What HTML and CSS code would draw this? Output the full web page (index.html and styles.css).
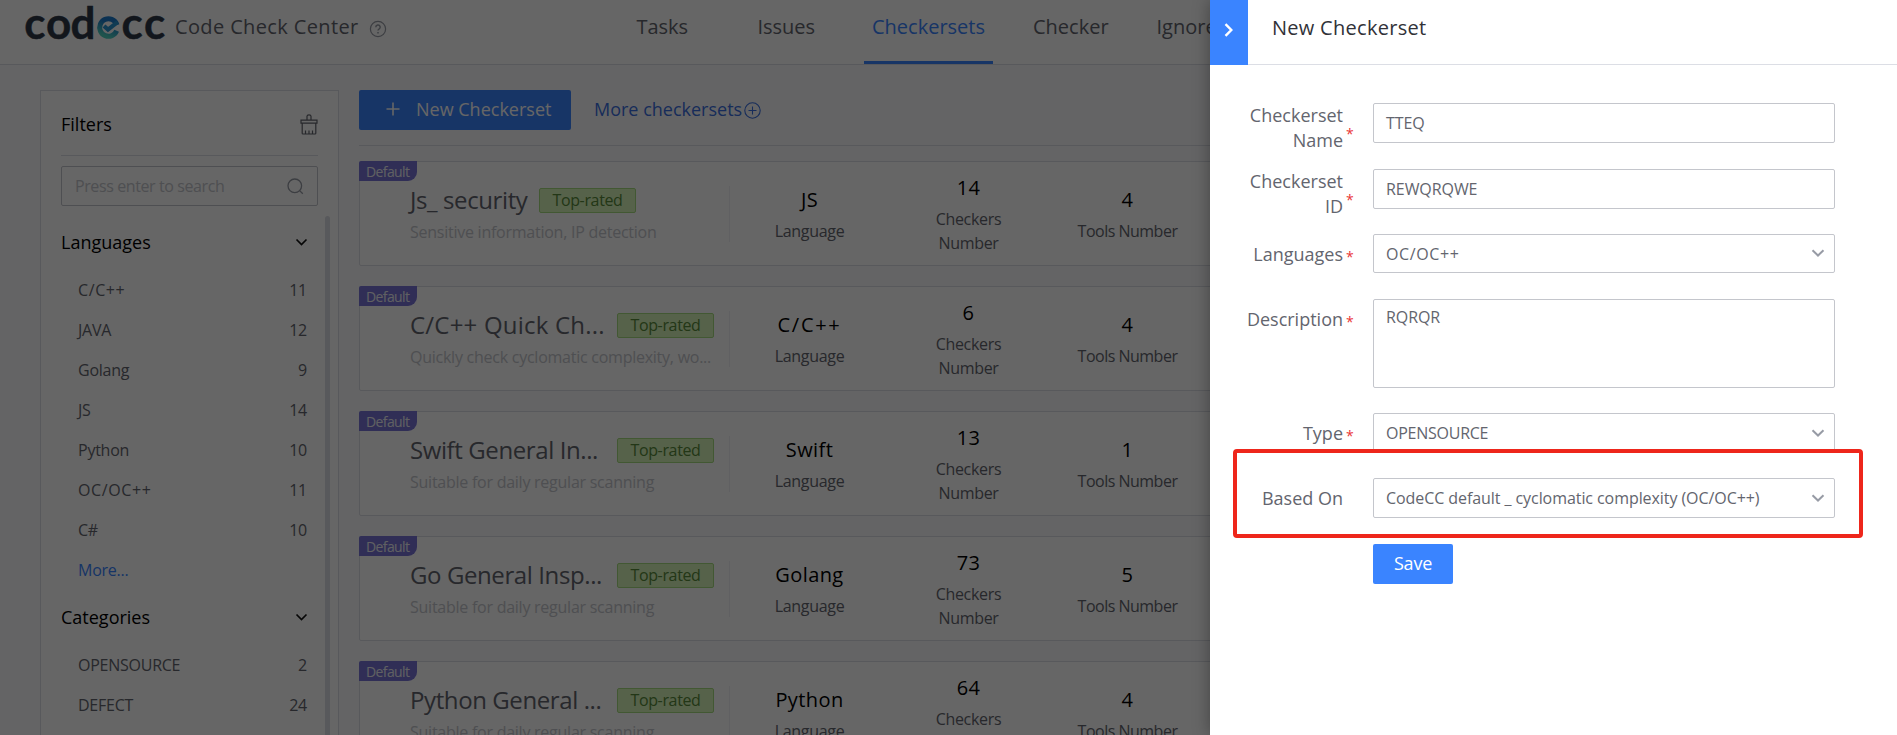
FILE: index.html
```html
<!DOCTYPE html>
<html lang="en">
<head>
<meta charset="utf-8">
<title>CodeCC - Checkersets</title>
<link rel="stylesheet" href="styles.css">
</head>
<body>
<div class="app">
  <header class="topbar">
    <div class="brand">
      <svg class="logo" width="144" height="44" viewBox="0 0 144 44" role="img" aria-label="codecc">
        <defs>
          <linearGradient id="mark" x1="0" y1="0" x2="0" y2="1">
            <stop offset=".25" stop-color="#1c7ccc"/>
            <stop offset="1" stop-color="#4fd0bf"/>
          </linearGradient>
        </defs>
        <text class="logo-text" x="0.300 22 46.500" y="38.500">cod</text>
        <circle cx="84.500" cy="27.500" r="8.800" fill="none" stroke="url(#mark)" stroke-width="5" stroke-dasharray="49 6.300" transform="rotate(22 84.500 27.500)"/>
        <path d="M80 26l4 3.600 9.500-7.400" fill="none" stroke="#2a93d0" stroke-width="4.200"/>
        <text class="logo-text" x="97.500 120" y="38.500">cc</text>
      </svg>
      <span class="brand-name">Code Check Center</span>
      <svg class="help" width="18" height="18" viewBox="0 0 18 18"><circle cx="9" cy="9" r="7.600" fill="none" stroke="#979ba5" stroke-width="1.200"/><path d="M6.800 7.300a2.200 2.200 0 1 1 3.200 1.900c-.7.4-1 .7-1 1.400M9 11.900v1.600" fill="none" stroke="#979ba5" stroke-width="1.500"/></svg>
    </div>
    <nav class="tabs">
      <a class="tab">Tasks</a>
      <a class="tab">Issues</a>
      <a class="tab active">Checkersets</a>
      <a class="tab">Checker</a>
      <a class="tab last">Ignore</a>
    </nav>
  </header>

  <div class="body">
    <aside class="sidebar">
      <div class="filter-head">
        <span>Filters</span>
        <svg width="18" height="21" viewBox="0 0 18 21" fill="none" stroke="#63656e" stroke-width="1.200"><path d="M7 6V2.200Q7 .8 9 .8t2 1.400V6M1 6.200h16v3H1zM2.200 9.200v10q0 .8.8.8h12q.8 0 .8-.8v-10M5.500 20v-3.500M9 20v-3.500M12.500 20v-3.500"/></svg>
      </div>
      <div class="search">
        <span>Press enter to search</span>
        <svg width="17" height="17" viewBox="0 0 17 17" fill="none" stroke="#979ba5" stroke-width="1.300"><circle cx="7.800" cy="7.800" r="6.800"/><path d="M12.600 12.600l3.200 3.200"/></svg>
      </div>
      <div class="filter-scroll">
        <div class="groups">
          <div class="group-head"><span>Languages</span><svg class="chev" width="13" height="9" viewBox="0 0 13 9"><path d="M1.500 1.500l5 5 5-5"/></svg></div>
          <div class="opt"><span class="plus">C/C++</span><span>11</span></div>
          <div class="opt"><span>JAVA</span><span>12</span></div>
          <div class="opt"><span>Golang</span><span>9</span></div>
          <div class="opt"><span>JS</span><span>14</span></div>
          <div class="opt"><span>Python</span><span>10</span></div>
          <div class="opt"><span class="plus">OC/OC++</span><span>11</span></div>
          <div class="opt"><span>C#</span><span>10</span></div>
          <div class="opt more"><span>More...</span></div>
          <div class="group-head"><span>Categories</span><svg class="chev" width="13" height="9" viewBox="0 0 13 9"><path d="M1.500 1.500l5 5 5-5"/></svg></div>
          <div class="opt"><span>OPENSOURCE</span><span>2</span></div>
          <div class="opt"><span>DEFECT</span><span>24</span></div>
        </div>
        <div class="scrollbar"></div>
      </div>
    </aside>

    <main class="main">
      <div class="toolbar">
        <div class="create"><svg width="14" height="14" viewBox="0 0 14 14"><path d="M7 .5v13M.5 7h13" stroke="#fff" stroke-width="1.600"/></svg><span>New Checkerset</span></div>
        <a class="more-sets">More checkersets<svg width="17" height="17" viewBox="0 0 17 17" fill="none" stroke="#3a6fe0" stroke-width="1.100"><circle cx="8.500" cy="8.500" r="7.700"/><path d="M8.500 4.500v8M4.500 8.500h8"/></svg></a>
      </div>

      <section class="card">
        <span class="flag">Default</span>
        <div class="info">
          <div class="title-line"><h3 class="title">Js_ security</h3><span class="rated">Top-rated</span></div>
          <p class="desc">Sensitive information, IP detection</p>
        </div>
        <i class="sep"></i>
        <div class="stat"><b>JS</b><span>Language</span></div>
        <div class="stat"><b>14</b><span>Checkers<br>Number</span></div>
        <div class="stat"><b>4</b><span>Tools Number</span></div>
      </section>

      <section class="card">
        <span class="flag">Default</span>
        <div class="info">
          <div class="title-line"><h3 class="title long wide">C/C++ Quick Ch...</h3><span class="rated">Top-rated</span></div>
          <p class="desc">Quickly check cyclomatic complexity, wo...</p>
        </div>
        <i class="sep"></i>
        <div class="stat"><b class="plus">C/C++</b><span>Language</span></div>
        <div class="stat"><b>6</b><span>Checkers<br>Number</span></div>
        <div class="stat"><b>4</b><span>Tools Number</span></div>
      </section>

      <section class="card">
        <span class="flag">Default</span>
        <div class="info">
          <div class="title-line"><h3 class="title long">Swift General In...</h3><span class="rated">Top-rated</span></div>
          <p class="desc">Suitable for daily regular scanning</p>
        </div>
        <i class="sep"></i>
        <div class="stat"><b>Swift</b><span>Language</span></div>
        <div class="stat"><b>13</b><span>Checkers<br>Number</span></div>
        <div class="stat"><b>1</b><span>Tools Number</span></div>
      </section>

      <section class="card">
        <span class="flag">Default</span>
        <div class="info">
          <div class="title-line"><h3 class="title long">Go General Insp...</h3><span class="rated">Top-rated</span></div>
          <p class="desc">Suitable for daily regular scanning</p>
        </div>
        <i class="sep"></i>
        <div class="stat"><b>Golang</b><span>Language</span></div>
        <div class="stat"><b>73</b><span>Checkers<br>Number</span></div>
        <div class="stat"><b>5</b><span>Tools Number</span></div>
      </section>

      <section class="card">
        <span class="flag">Default</span>
        <div class="info">
          <div class="title-line"><h3 class="title long">Python General ...</h3><span class="rated">Top-rated</span></div>
          <p class="desc">Suitable for daily regular scanning</p>
        </div>
        <i class="sep"></i>
        <div class="stat"><b>Python</b><span>Language</span></div>
        <div class="stat"><b>64</b><span>Checkers<br>Number</span></div>
        <div class="stat"><b>4</b><span>Tools Number</span></div>
      </section>
    </main>
  </div>

  <div class="mask"></div>

  <aside class="drawer">
    <div class="drawer-head">
      <div class="closer"><svg width="10" height="14" viewBox="0 0 10 14"><path d="M1.500 1.200L7.300 7l-5.800 5.800" fill="none" stroke="#fff" stroke-width="2.400"/></svg></div>
      <div class="drawer-title">New Checkerset</div>
    </div>
    <div class="form">
      <div class="field two">
        <label>Checkerset<br>Name</label><em>*</em>
        <div class="control">TTEQ</div>
      </div>
      <div class="field two tight">
        <label>Checkerset<br>ID</label><em>*</em>
        <div class="control">REWQRQWE</div>
      </div>
      <div class="field">
        <label>Languages</label><em>*</em>
        <div class="control short"><span class="plus">OC/OC++</span><svg width="14" height="9" viewBox="0 0 14 9"><path d="M1.500 1.300L7 6.500l5.500-5.200"/></svg></div>
      </div>
      <div class="field tight">
        <label>Description</label><em>*</em>
        <div class="control area">RQRQR</div>
      </div>
      <div class="field tight">
        <label>Type</label><em>*</em>
        <div class="control tighter"><span>OPENSOURCE</span><svg width="14" height="9" viewBox="0 0 14 9"><path d="M1.500 1.300L7 6.500l5.500-5.200"/></svg></div>
      </div>
      <div class="field">
        <label>Based On</label><em></em>
        <div class="control"><span>CodeCC default _ cyclomatic complexity (OC/OC++)</span><svg width="14" height="9" viewBox="0 0 14 9"><path d="M1.500 1.300L7 6.500l5.500-5.200"/></svg></div>
        <div class="marker"></div>
      </div>
      <div class="save">Save</div>
    </div>
  </aside>
</div>
</body>
</html>
```

FILE: styles.css
```css
* { box-sizing: border-box; }
body {
  margin: 0;
  font-family: "Open Sans", "Noto Sans", sans-serif;
  font-size: 16px;
  color: #63656e;
}
.app {
  position: relative;
  height: 735px;
  overflow: hidden;
  background: #fafbfd;
}
svg { display: block; flex: none; }

/* header */
.topbar {
  display: flex;
  height: 65px;
  background: #fff;
  border-bottom: 1px solid #dcdee5;
  font-size: 20px;
  line-height: 54px;
  white-space: nowrap;
}
.brand {
  display: flex;
  align-items: flex-start;
  width: 616px;
  padding-left: 24px;
}
.logo-text {
  font: 700 44px Lato, sans-serif;
  fill: #2d3748;
  stroke: #2d3748;
  stroke-width: .4;
  stroke-linejoin: round;
}
.brand-name { margin-left: 7px; letter-spacing: .37px; }
.help { margin: 20px 0 0 10px; }
.tabs { display: flex; gap: 31.500px; }
.tab {
  min-width: 92.500px;
  height: 64px;
  padding: 0 8px;
  text-align: center;
}
.tab.active { color: #3a84ff; border-bottom: 3px solid #3a84ff; }
.tab.last { text-align: left; }

/* layout */
.body { display: flex; padding: 25px 0 0 40px; }

/* filters */
.sidebar {
  flex: none;
  width: 299px;
  height: 660px;
  padding-top: 15px;
  background: #fff;
  border: 1px solid #dcdee5;
}
.filter-head {
  display: flex;
  align-items: center;
  justify-content: space-between;
  width: 257px;
  height: 50px;
  margin-left: 20px;
  padding-bottom: 12px;
  border-bottom: 1px solid #dcdee5;
  font-size: 18px;
  color: #000;
}
.filter-head span { line-height: 36px; padding-bottom: 2px; }
.search {
  display: flex;
  align-items: center;
  justify-content: space-between;
  width: 257px;
  height: 40px;
  margin: 10px 0 9px 20px;
  padding: 0 13px;
  border: 1px solid #c4c6cc;
  border-radius: 2px;
  color: #c4c6cc;
  letter-spacing: -.4px;
}
.filter-scroll { display: flex; }
.groups { width: 284px; flex: none; padding: 0 17px 0 20px; }
.scrollbar {
  width: 5px;
  height: 600px;
  margin-top: 1px;
  background: #dcdee5;
  border-radius: 3px;
}
.group-head {
  display: flex;
  align-items: center;
  justify-content: space-between;
  height: 55px;
  font-size: 18px;
  color: #000;
}
.group-head span { padding-bottom: 2px; }
.chev path { fill: none; stroke: #111; stroke-width: 1.700; }
.opt {
  display: flex;
  justify-content: space-between;
  padding: 0 1px 0 17px;
  line-height: 40px;
  letter-spacing: -.25px;
}
.plus { letter-spacing: .6px; }
.more { color: #3a84ff; }

/* list */
.main { flex: none; width: 1500px; margin-left: 20px; }
.toolbar {
  display: flex;
  align-items: flex-start;
  height: 56px;
  margin-bottom: 15px;
  border-bottom: 1px solid #dcdee5;
  font-size: 18px;
}
.create {
  display: flex;
  align-items: center;
  gap: 16px;
  width: 212px;
  height: 40px;
  padding-left: 27px;
  background: #3a84ff;
  border-radius: 2px;
  color: #fff;
}
.create svg { margin-bottom: 3px; }
.create span { padding-bottom: 2px; }
.more-sets {
  display: flex;
  align-items: center;
  gap: 2px;
  height: 37px;
  margin-left: 23px;
  color: #3a6fe0;
}
.more-sets svg { margin-top: 3px; }
.card {
  position: relative;
  display: flex;
  align-items: center;
  height: 105px;
  margin-bottom: 20px;
  background: #fff;
  border: 1px solid #dcdee5;
  border-radius: 2px;
}
.flag {
  position: absolute;
  top: -1px;
  left: -1px;
  width: 58px;
  height: 20px;
  padding-left: 7px;
  background: #7874d8;
  border-radius: 2px 0 9px 0;
  color: #f0f1f5;
  font-size: 14px;
  line-height: 21px;
  letter-spacing: -.6px;
}
.info { width: 369px; padding-left: 50px; white-space: nowrap; }
.title-line { display: flex; gap: 8px; height: 32px; margin-top: 2px; }
.title {
  width: 121px;
  margin: 0;
  font-size: 24px;
  font-weight: 400;
  line-height: 30px;
  letter-spacing: -.4px;
}
.title.long { width: 199px; letter-spacing: -.4px; }
.title.wide { letter-spacing: .2px; }
.rated {
  width: 97px;
  height: 25px;
  margin-top: 3px;
  background: #d6f5b8;
  border: 1px solid #a6dc80;
  border-radius: 2px;
  color: #588a3a;
  line-height: 22px;
  text-align: center;
  letter-spacing: -.35px;
}
.desc {
  margin: 3px 0 1px;
  color: #c4c6cc;
  line-height: 24px;
  letter-spacing: -.25px;
}
.sep { width: 1px; height: 56px; background: #f0f1f5; }
.stat {
  display: flex;
  flex-direction: column;
  align-items: center;
  gap: 5px;
  width: 159px;
  padding-top: 1px;
  text-align: center;
}
.stat b {
  color: #000;
  font-size: 20px;
  font-weight: 400;
  line-height: 28px;
  letter-spacing: .4px;
}
.stat b.plus { letter-spacing: 1.700px; }
.stat span { line-height: 24px; letter-spacing: -.3px; white-space: nowrap; }
.stat:last-child span { letter-spacing: -.5px; }

/* overlay */
.mask {
  position: absolute;
  inset: 0;
  background: rgba(0, 0, 0, .6);
}
.drawer {
  position: absolute;
  top: 0;
  right: 0;
  width: 687px;
  height: 735px;
  background: #fff;
  box-shadow: 0 0 16px rgba(0, 0, 0, .35);
}
.drawer-head { display: flex; height: 65px; }
.closer {
  display: flex;
  align-items: center;
  width: 38px;
  padding: 0 0 5px 14px;
  background: #3a84ff;
}
.drawer-title {
  flex: 1;
  padding-left: 24px;
  border-bottom: 1px solid #dcdee5;
  color: #313238;
  font-size: 20px;
  line-height: 55px;
  letter-spacing: .28px;
}
.form { padding: 38px 0 0 10px; }
.field {
  position: relative;
  display: grid;
  grid-template-columns: 123px 30px 462px;
  margin-bottom: 26px;
}
.field.tight, .field:nth-child(5) { margin-bottom: 25px; }
.field label {
  height: 39px;
  font-size: 18px;
  line-height: 40px;
  text-align: right;
}
.field.two label { height: 40px; line-height: 25px; }
.field.two.tight label { line-height: 24.500px; }
.field em {
  height: 39px;
  padding-left: 3px;
  color: #ea3636;
  font-size: 14px;
  font-style: normal;
  line-height: 45px;
}
.field.two em { line-height: 61px; }
.control {
  display: flex;
  align-items: center;
  justify-content: space-between;
  height: 40px;
  padding: 0 9px 0 12px;
  border: 1px solid #c4c6cc;
  border-radius: 2px;
  letter-spacing: -.07px;
}
.control.tighter { letter-spacing: -.25px; }
.control.short { height: 39px; }
.control.area { align-items: flex-start; height: 89px; padding-top: 6px; }
.control path { fill: none; stroke: #979ba5; stroke-width: 2; }
.marker {
  position: absolute;
  top: -29px;
  left: 13px;
  width: 630px;
  height: 89px;
  border: 4px solid #ee261b;
  border-radius: 4px;
}
.save {
  width: 80px;
  height: 40px;
  margin-left: 153px;
  background: #3a84ff;
  border-radius: 2px;
  color: #fff;
  font-size: 18px;
  line-height: 38px;
  letter-spacing: -.2px;
  text-align: center;
}
```
